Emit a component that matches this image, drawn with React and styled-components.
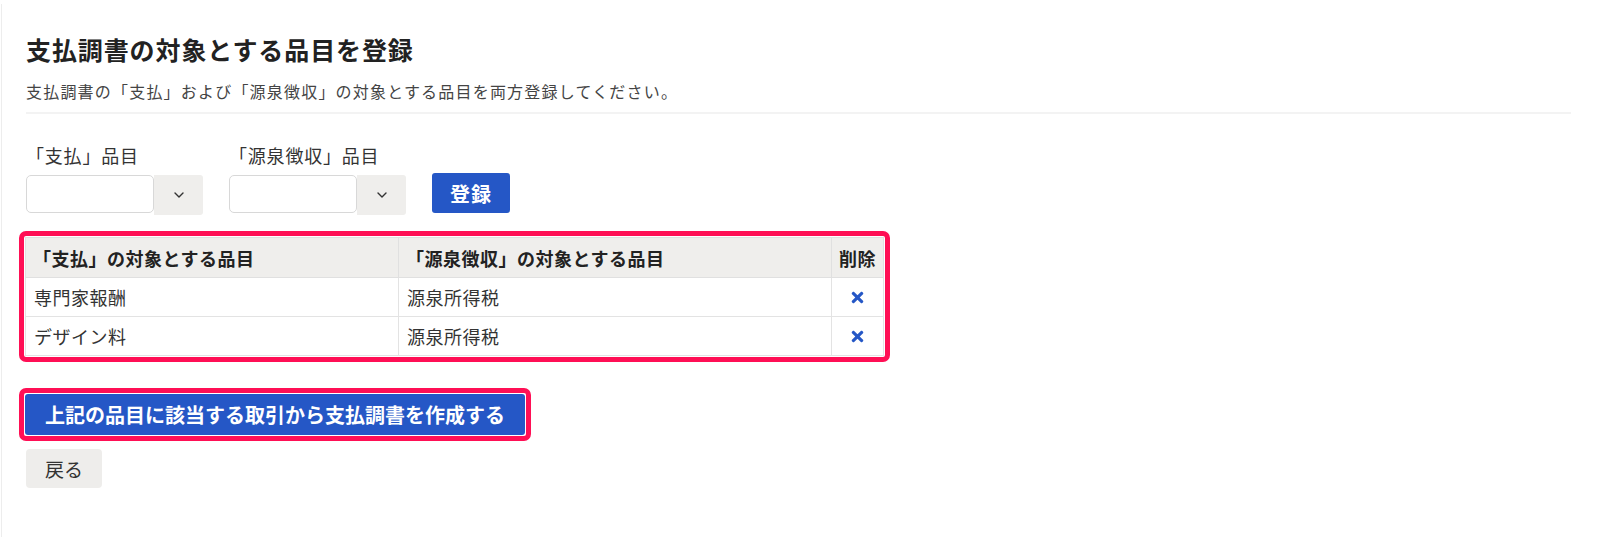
import styled, { createGlobalStyle } from 'styled-components'
import { FaTimes } from 'react-icons/fa'

const GlobalStyle = createGlobalStyle`
  html, body {
    margin: 0;
    padding: 0;
    background: #fff;
  }
  body {
    font-family: "Noto Sans CJK JP", "Noto Sans", sans-serif;
    color: #333;
  }
  * {
    box-sizing: border-box;
  }
`

const Page = styled.div`
  min-height: 537px;
  margin: 4px 0 0 1px;
  padding: 27px 29px 40px 24px;
  border-left: 1px solid #ededed;
`

const Title = styled.h2`
  margin: 0;
  font-size: 25px;
  line-height: 36px;
  font-weight: 700;
  letter-spacing: 0.9px;
  color: #222;
`

const Lead = styled.p`
  margin: 12px 0 0;
  font-size: 16px;
  line-height: 24px;
  letter-spacing: 1.2px;
  color: #444;
`

const Divider = styled.hr`
  margin: 9px 0 0;
  height: 2px;
  border: 0;
  background: #f3f3f3;
`

const FormRow = styled.div`
  display: flex;
  align-items: flex-end;
  gap: 26px;
  margin-top: 28px;
`

const Field = styled.div`
  display: flex;
  flex-direction: column;
  gap: 7px;
`

const Label = styled.label`
  font-size: 18px;
  line-height: 26px;
  letter-spacing: 0.8px;
  color: #333;
`

const SelectBox = styled.div`
  display: flex;
  align-items: flex-start;
  height: 40px;
`

const SelectInput = styled.div`
  width: 128px;
  height: 38px;
  background: #fff;
  border: 1px solid #d8d8d8;
  border-radius: 5px;
`

const SelectToggle = styled.div`
  display: flex;
  align-items: center;
  justify-content: center;
  width: 49px;
  height: 40px;
  background: #efeeec;
  border-radius: 0 3px 3px 0;
  color: #333;
`

const PrimaryButton = styled.button`
  height: ${({ wide }) => (wide ? '41px' : '40px')};
  padding: 0 ${({ wide }) => (wide ? '20px' : '18px')};
  margin-bottom: ${({ wide }) => (wide ? '0' : '2px')};
  border: 0;
  border-radius: 3px;
  background: #2557c6;
  color: #fff;
  font-family: inherit;
  font-size: 20px;
  font-weight: 700;
  letter-spacing: ${({ wide }) => (wide ? '0' : '1px')};
  cursor: pointer;
`

const Highlight = styled.div`
  display: flex;
  width: fit-content;
  margin: ${({ top }) => top} 0 0 -7px;
  padding: 1px;
  border: 5px solid #ff0f55;
  border-radius: 7px;
  background: #fff;
`

const Table = styled.table`
  border-collapse: collapse;
  border: 1px solid #dedede;
  font-size: 18px;
  letter-spacing: 0.5px;
`

const HeadCell = styled.th`
  width: ${({ w }) => w}px;
  height: 40px;
  padding: 0 ${({ center }) => (center ? '0' : '7px')};
  background: #efeeec;
  border: 1px solid #e0e0e0;
  text-align: ${({ center }) => (center ? 'center' : 'left')};
  font-weight: 700;
  color: #222;
`

const Cell = styled.td`
  height: 39px;
  padding: 0 ${({ center }) => (center ? '0' : '8px')};
  border: 1px solid #e3e3e3;
  text-align: ${({ center }) => (center ? 'center' : 'left')};
  color: #333;
`

const RemoveIcon = styled(FaTimes)`
  display: block;
  margin: 0 auto;
  color: #2557c6;
  cursor: pointer;
`

const BackButton = styled.button`
  display: block;
  width: 76px;
  height: 39px;
  margin-top: 8px;
  border: 0;
  border-radius: 4px;
  background: #eeedeb;
  color: #333;
  font-family: inherit;
  font-size: 19px;
  cursor: pointer;
`

const Chevron = () => (
  <svg width="10" height="6" viewBox="0 0 10 6" fill="none">
    <path d="M1 1l4 4 4-4" stroke="#333" strokeWidth="1.4" strokeLinecap="round" strokeLinejoin="round" />
  </svg>
)

const rows = [
  { pay: '専門家報酬', tax: '源泉所得税' },
  { pay: 'デザイン料', tax: '源泉所得税' },
]

const Select = () => (
  <SelectBox>
    <SelectInput />
    <SelectToggle>
      <Chevron />
    </SelectToggle>
  </SelectBox>
)

const App = () => (
  <>
    <GlobalStyle />
    <Page>
      <Title>支払調書の対象とする品目を登録</Title>
      <Lead>支払調書の「支払」および「源泉徴収」の対象とする品目を両方登録してください。</Lead>
      <Divider />

      <FormRow>
        <Field>
          <Label>「支払」品目</Label>
          <Select />
        </Field>
        <Field>
          <Label>「源泉徴収」品目</Label>
          <Select />
        </Field>
        <PrimaryButton>登録</PrimaryButton>
      </FormRow>

      <Highlight top="16px">
        <Table>
          <thead>
            <tr>
              <HeadCell w={373}>「支払」の対象とする品目</HeadCell>
              <HeadCell w={433}>「源泉徴収」の対象とする品目</HeadCell>
              <HeadCell w={52} center>削除</HeadCell>
            </tr>
          </thead>
          <tbody>
            {rows.map((row) => (
              <tr key={row.pay}>
                <Cell>{row.pay}</Cell>
                <Cell>{row.tax}</Cell>
                <Cell center>
                  <RemoveIcon size={17} />
                </Cell>
              </tr>
            ))}
          </tbody>
        </Table>
      </Highlight>

      <Highlight top="26px">
        <PrimaryButton wide>上記の品目に該当する取引から支払調書を作成する</PrimaryButton>
      </Highlight>
      <BackButton>戻る</BackButton>
    </Page>
  </>
)

export default App
